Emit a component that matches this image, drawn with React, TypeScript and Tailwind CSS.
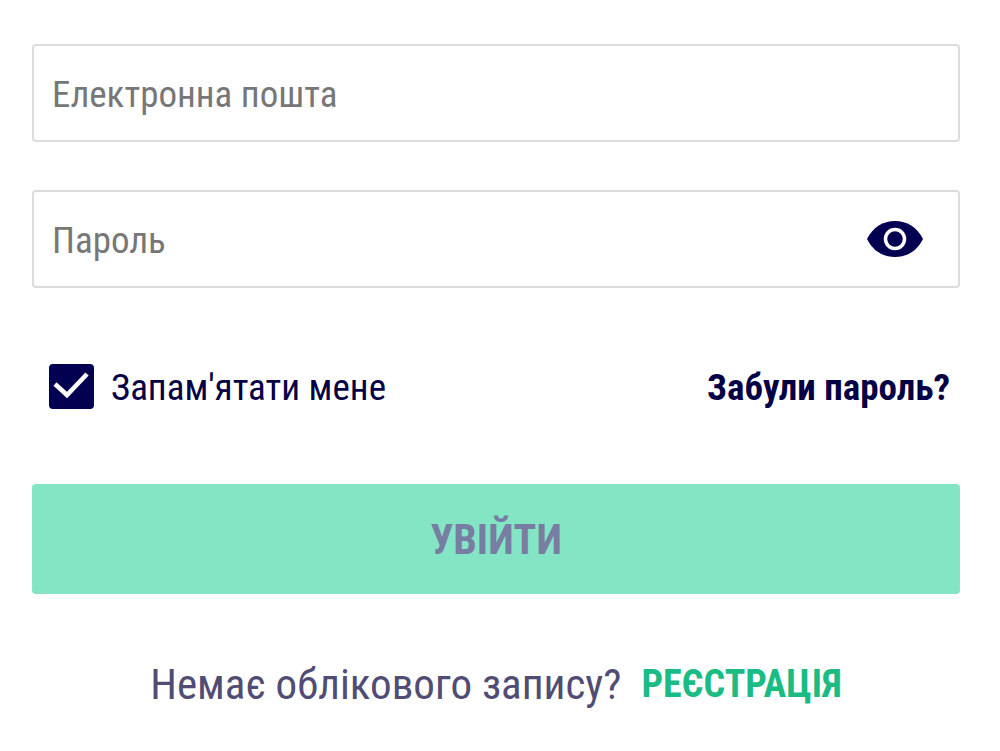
import { useState } from 'react'

export default function App() {
  const [remember, setRemember] = useState(true)
  const [showPassword, setShowPassword] = useState(false)

  return (
    <main className="bg-white pt-11 pr-10 pl-8 font-['Roboto_Condensed','Roboto',sans-serif] text-[#050045]">
      <form onSubmit={(e) => e.preventDefault()}>
        <input
          type="email"
          aria-label="Електронна пошта"
          placeholder="Електронна пошта"
          className="block h-[98px] w-full rounded-sm border-2 border-[#dcdcdf] px-[18px] pt-0.5 text-[37px] outline-none placeholder:text-[#777777]"
        />
        <div className="mt-12 flex h-[98px] items-center rounded-sm border-2 border-[#dcdcdf] pr-[34px] pl-[18px]">
          <input
            type={showPassword ? 'text' : 'password'}
            aria-label="Пароль"
            placeholder="Пароль"
            className="min-w-0 flex-1 pt-1 text-[37px] outline-none placeholder:text-[#777777]"
          />
          <button type="button" aria-label="Показати пароль" onClick={() => setShowPassword(!showPassword)}>
            <svg viewBox="0 0 58 38" className="h-[38px] w-[58px]">
              <path d="M1 19C7 7 17 1 29 1s22 6 28 18C51 31 41 37 29 37S7 31 1 19z" fill="#030052" />
              <circle cx="29" cy="19" r="9.5" fill="none" stroke="#fff" strokeWidth="3.5" />
            </svg>
          </button>
        </div>

        <div className="mt-[68px] flex items-center justify-between pr-[10px] pl-[17px] text-[37px] leading-[56px]">
          <label className="flex items-center gap-[17px]">
            <span className="grid size-[45px]">
              <input
                type="checkbox"
                checked={remember}
                onChange={(e) => setRemember(e.target.checked)}
                className="peer col-start-1 row-start-1 appearance-none rounded-sm border-4 border-[#030052] checked:bg-[#030052]"
              />
              <svg viewBox="0 0 45 45" className="pointer-events-none invisible col-start-1 row-start-1 peer-checked:visible">
                <path d="M6 20l12 11L38 10" fill="none" stroke="#fff" strokeWidth="4.5" />
              </svg>
            </span>
            <span className="pt-1">Запам'ятати мене</span>
          </label>
          <a href="#forgot" className="pt-1 font-bold">Забули пароль?</a>
        </div>

        <button type="submit" className="mt-[68px] h-[110px] w-full rounded-sm bg-[#84e5c5] text-[42px] font-bold text-[#777da3]">
          УВІЙТИ
        </button>
      </form>
      <p className="mt-[62px] flex items-center justify-center gap-5 text-[43px] leading-[56px] text-[#514c73]">
        Немає облікового запису?
        <a href="#register" className="text-[38px] font-bold text-[#1abc84]">РЕЄСТРАЦІЯ</a>
      </p>
    </main>
  )
}
